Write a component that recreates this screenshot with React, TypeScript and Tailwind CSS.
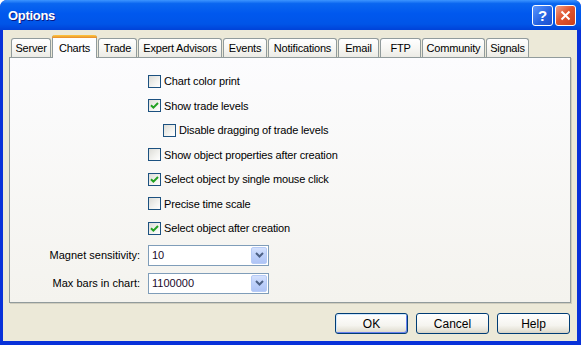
import { useState } from 'react';

const tabs = [
  { name: 'Server', w: 'w-[40px]' },
  { name: 'Charts', w: 'w-[45px]' },
  { name: 'Trade', w: 'w-[39px]' },
  { name: 'Expert Advisors', w: 'w-[84px]' },
  { name: 'Events', w: 'w-[44px]' },
  { name: 'Notifications', w: 'w-[69px]' },
  { name: 'Email', w: 'w-[41px]' },
  { name: 'FTP', w: 'w-[41px]' },
  { name: 'Community', w: 'w-[63px]' },
  { name: 'Signals', w: 'w-[43px]' },
];

const options = [
  { label: 'Chart color print', checked: false, indent: false },
  { label: 'Show trade levels', checked: true, indent: false },
  { label: 'Disable dragging of trade levels', checked: false, indent: true },
  { label: 'Show object properties after creation', checked: false, indent: false },
  { label: 'Select object by single mouse click', checked: true, indent: false },
  { label: 'Precise time scale', checked: false, indent: false },
  { label: 'Select object after creation', checked: true, indent: false },
];

const CheckBox = ({ checked }: { checked: boolean }) => (
  <span className="w-[13px] h-[13px] shrink-0 border border-[#1c5180] bg-[linear-gradient(135deg,#dcdcd7_0%,#f3f3f0_60%,#ffffff_100%)] flex items-center justify-center">
    {checked && (
      <svg width="9" height="9" viewBox="0 0 9 9">
        <path d="M1 4.2 L3.4 6.6 L8 2" stroke="#21a121" strokeWidth="2" fill="none" />
      </svg>
    )}
  </span>
);

const Combo = ({ value }: { value: string }) => (
  <div className="w-[121px] h-[21px] border border-[#7f9db9] bg-white flex items-center justify-between pl-[3px] pr-px">
    <span className="text-[11px] text-[#1a0a2a]">{value}</span>
    <span className="w-[16px] h-[17px] rounded-[2px] border border-[#b6cbf6] bg-[linear-gradient(180deg,#d4e1fd_0%,#bdd0fa_50%,#afc4f5_100%)] flex items-center justify-center">
      <svg width="9" height="6" viewBox="0 0 9 6">
        <path d="M1 1 L4.5 4.5 L8 1" stroke="#4d6185" strokeWidth="2" fill="none" />
      </svg>
    </span>
  </div>
);

const DlgButton = ({ label, def }: { label: string; def?: boolean }) => (
  <button
    className={
      'w-[73px] h-[21px] rounded-[3px] border border-[#003c74] bg-[linear-gradient(180deg,#ffffff_0%,#f5f4ef_60%,#e3e0d4_90%,#d6d0c5_100%)] text-[12px] text-black ' +
      (def ? 'shadow-[inset_1px_1px_0_#cee7ff,inset_-1px_-1px_0_#6982ee]' : '')
    }
  >
    {label}
  </button>
);

function App() {
  const [active, setActive] = useState('Charts');

  return (
    <div className="w-[581px] h-[345px] flex flex-col bg-[#0831d9] rounded-t-[7px] overflow-hidden font-['Liberation_Sans',Arial,sans-serif]">
      <div className="h-[30px] shrink-0 flex items-center justify-between pl-[8px] pr-[5px] bg-[linear-gradient(180deg,#3d95ff_0%,#0a66f0_12%,#0058ee_45%,#0055e8_80%,#0042d8_100%)]">
        <span className="text-white font-bold text-[13px] tracking-[-0.3px] pt-[2px] [text-shadow:1px_1px_0_#0a1883]">
          Options
        </span>
        <div className="flex gap-[2px]">
          <span className="w-[21px] h-[21px] rounded-[3px] border border-white bg-[linear-gradient(135deg,#5a96ff_0%,#2461e0_60%,#1d4fcf_100%)] flex items-center justify-center text-white font-bold text-[15px] leading-none">
            ?
          </span>
          <span className="w-[21px] h-[21px] rounded-[3px] border border-white bg-[linear-gradient(135deg,#f0a08a_0%,#e0552f_45%,#c9401c_100%)] flex items-center justify-center">
            <svg width="11" height="11" viewBox="0 0 11 11">
              <path d="M1.5 1.5 L9.5 9.5 M9.5 1.5 L1.5 9.5" stroke="#fff" strokeWidth="2" />
            </svg>
          </span>
        </div>
      </div>

      <div className="flex-1 flex pl-[3px] pr-[4px] pb-[4px]">
        <div className="flex-1 bg-[#ece9d8] flex flex-col px-[6px] pt-[5px]">
          <div className="flex items-end gap-px ml-[2px] h-[23px] relative z-10 -mb-px">
            {tabs.map((t) =>
              t.name === active ? (
                <div
                  key={t.name}
                  className={t.w + ' h-[23px] rounded-t-[3px] border-x border-[#919b9c] bg-[linear-gradient(180deg,#ffffff,#fcfcfe)] flex flex-col'}
                >
                  <span className="h-[3px] rounded-t-[3px] bg-[linear-gradient(180deg,#ffc83c,#e68b2c)] -mx-px" />
                  <span className="flex-1 flex items-center justify-center text-[11px] text-black tracking-[-0.2px]">
                    {t.name}
                  </span>
                </div>
              ) : (
                <div
                  key={t.name}
                  onClick={() => setActive(t.name)}
                  className={t.w + ' h-[19px] mb-px rounded-t-[3px] border border-b-0 border-[#919b9c] bg-[linear-gradient(180deg,#ffffff_0%,#f7f7f4_50%,#ecebe5_100%)] flex items-center justify-center text-[11px] text-black tracking-[-0.2px]'}
                >
                  {t.name}
                </div>
              )
            )}
          </div>

          <div className="h-[246px] border border-[#919b9c] shadow-[1px_1px_0_#d0cdbe] bg-[linear-gradient(180deg,#fcfcfe_0%,#f4f3ee_100%)] pt-[11px] pl-[138px] flex flex-col">
            {options.map((o) => (
              <label
                key={o.label}
                className={'h-[24.5px] flex items-center gap-[3px] text-[11px] text-black tracking-[-0.15px] ' + (o.indent ? 'pl-[15px]' : '')}
              >
                <CheckBox checked={o.checked} />
                <span>{o.label}</span>
              </label>
            ))}
            <div className="-ml-[138px] mt-[4px] flex flex-col gap-[7px]">
              <div className="flex items-center gap-[8px]">
                <span className="w-[130px] text-right text-[11px] text-black">Magnet sensitivity:</span>
                <Combo value="10" />
              </div>
              <div className="flex items-center gap-[8px]">
                <span className="w-[130px] text-right text-[11px] text-black">Max bars in chart:</span>
                <Combo value="1100000" />
              </div>
            </div>
          </div>

          <div className="flex justify-end gap-[8px] mt-[10px] mr-px">
            <DlgButton label="OK" def />
            <DlgButton label="Cancel" />
            <DlgButton label="Help" />
          </div>
        </div>
      </div>
    </div>
  );
}

export default App;
